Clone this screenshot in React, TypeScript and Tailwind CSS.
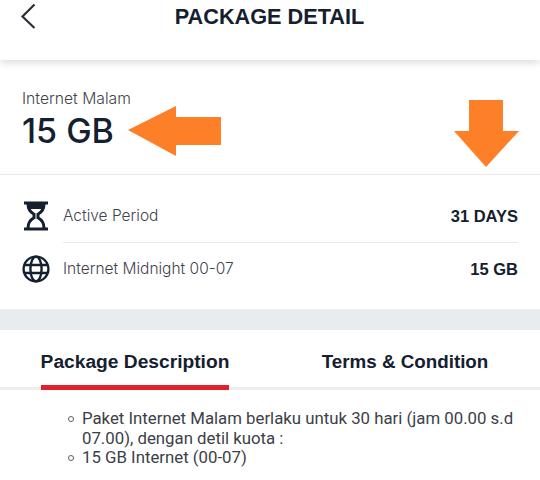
import React from "react";

const sans = "font-['Liberation_Sans',Arial,sans-serif]";
const inter = "font-['Inter',sans-serif]";

function Hourglass() {
  return (
    <svg width="26" height="30" viewBox="0 0 26 30" fill="none" stroke="#14202f">
      <path d="M1 2h24M1 28h24" strokeWidth="3" />
      <path
        d="M5 3c0 5 2 8 6 10.2v3.6C7 19 5 22 5 27M21 3c0 5-2 8-6 10.2v3.6C19 19 21 22 21 27"
        strokeWidth="3"
      />
      <path d="M5 3h16l-1.5 5H6.5z" fill="#14202f" stroke="none" />
    </svg>
  );
}

function Globe() {
  return (
    <svg width="28" height="28" viewBox="0 0 28 28" fill="none" stroke="#14202f" strokeWidth="2.4">
      <circle cx="14" cy="14" r="12.4" />
      <ellipse cx="14" cy="14" rx="5.6" ry="12.4" />
      <path d="M2.5 10h23M2.5 18h23" />
    </svg>
  );
}

function Row({ icon, label, value }: { icon: React.ReactNode; label: string; value: string }) {
  return (
    <div className="flex items-center h-[52px]">
      <div className="w-[41px] flex justify-center pr-[13px] shrink-0">{icon}</div>
      <div className="flex-1 flex items-center justify-between h-full">
        <span className={`${inter} text-[15.5px] font-light text-[#3f444c]`}>{label}</span>
        <span className="text-[16.5px] font-bold text-[#14202f]">{value}</span>
      </div>
    </div>
  );
}

function Bullet({ children }: { children: React.ReactNode }) {
  return (
    <li className="flex">
      <span className="w-[6px] h-[6px] mt-[7px] ml-[-14px] mr-[8px] shrink-0 rounded-full border border-[#5a5f66]" />
      <span>{children}</span>
    </li>
  );
}

export default function App() {
  return (
    <div className={`relative w-[540px] h-[480px] overflow-hidden bg-white ${sans}`}>
      {/* header */}
      <div className="relative h-[60px] bg-white shadow-[0_2px_8px_rgba(0,0,0,0.16)] flex justify-center pt-[5px]">
        <svg className="absolute left-[20px] top-[3px]" width="16" height="26" viewBox="0 0 16 26" fill="none" stroke="#2a3038" strokeWidth="2.2">
          <path d="M14.5 1.5 2.5 13.5l12 11.5" />
        </svg>
        <h1 className="text-[21.7px] leading-[24px] font-bold text-[#14202f] mr-[1px]">PACKAGE DETAIL</h1>
      </div>

      {/* package name */}
      <div className="h-[115px] border-b border-[#e9e9e9] px-[22px] pt-[29px]">
        <div className={`${inter} text-[15.7px] leading-[20px] font-light text-[#3f444c]`}>Internet Malam</div>
        <div className={`${inter} text-[34px] leading-[38px] font-medium text-[#14202f] mt-[3px]`}>15 GB</div>
      </div>

      {/* details */}
      <div className="h-[134px] pl-[22px] pr-[22px] pt-[15px]">
        <div>
          <Row icon={<Hourglass />} label="Active Period" value="31 DAYS" />
          <div className="ml-[41px] border-t border-[#e9e9e9]" />
          <Row icon={<Globe />} label="Internet Midnight 00-07" value="15 GB" />
        </div>
      </div>

      <div className="h-[21px] bg-[#e9ecef]" />

      {/* tabs */}
      <div className="relative h-[60px] flex border-b-[3px] border-[#eeeeee]">
        <div className="relative w-[270px] flex justify-center pt-[20px]">
          <span className="text-[19.2px] leading-[24px] font-bold text-[#14202f]">Package Description</span>
          <div className="absolute left-[41px] w-[188px] -bottom-[3px] h-[5px] bg-[#e0202c]" />
        </div>
        <div className="w-[270px] flex justify-center pt-[20px]">
          <span className="text-[18.8px] leading-[24px] font-bold text-[#14202f]">Terms &amp; Condition</span>
        </div>
      </div>

      {/* description */}
      <ul className="pl-[82px] pr-[20px] pt-[19px] font-['Roboto',sans-serif] text-[16.8px] leading-[19.5px] text-[#3c4047]">
        <Bullet>Paket Internet Malam berlaku untuk 30 hari (jam 00.00 s.d 07.00), dengan detil kuota :</Bullet>
        <Bullet>15 GB Internet (00-07)</Bullet>
      </ul>

      {/* orange annotation arrows */}
      <svg className="absolute left-[128px] top-[106px]" width="94" height="50" viewBox="0 0 94 50">
        <path d="M0 24 48 0v11h45v28H48v11z" fill="#fd7f28" />
      </svg>
      <svg className="absolute left-[453px] top-[100px]" width="67" height="68" viewBox="0 0 67 68">
        <path d="M16 0h34v31h16L33 67 1 31h15z" fill="#fd7f28" />
      </svg>
    </div>
  );
}
